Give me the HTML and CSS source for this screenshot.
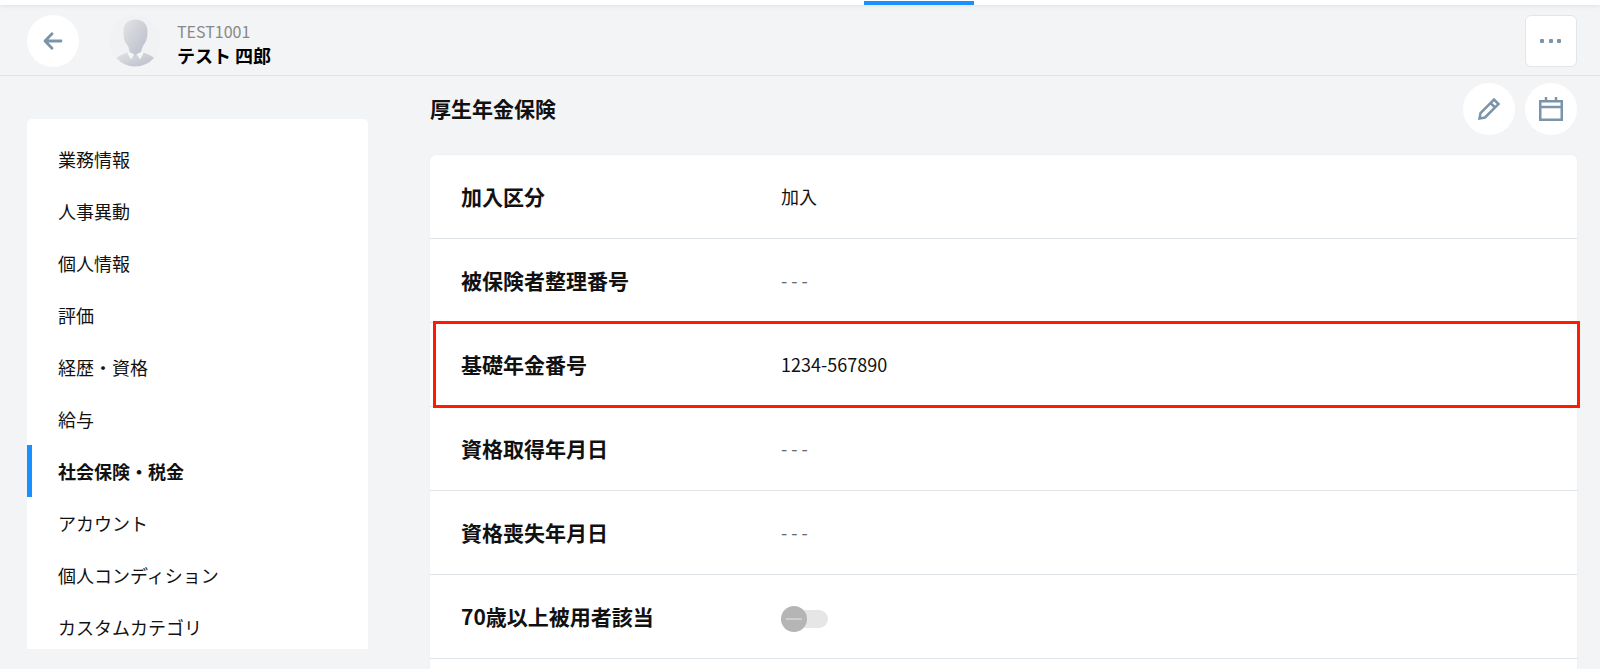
FILE: index.html
```html
<!DOCTYPE html>
<html lang="ja">
<head>
    <meta charset="UTF-8">
    <title>社会保険・税金</title>

    <link rel="stylesheet" href="styles.css">
</head>

<body>
    <div class="tabs">
        <div class="tab-active"></div>
    </div>

    <header class="header">
        <button type="button" class="circle" aria-label="戻る">
            <svg width="20" height="20" viewBox="0 0 20 20" fill="none" stroke="currentColor" stroke-width="2.8" stroke-linecap="round" stroke-linejoin="round">
                <path d="M18 10H2.5M9 2.7L2 10l7 7.3" />
            </svg>
        </button>
        <svg class="avatar" width="52" height="52" viewBox="0 0 52 52">
            <defs>
                <linearGradient id="avatarColor" x1="0" y1="0" x2="1" y2="1">
                    <stop offset="0" stop-color="#e2e3e5" />
                    <stop offset="1" stop-color="#b9bdc8" />
                </linearGradient>
            </defs>
            <circle cx="26" cy="26" r="26" fill="#f1f2f4" />
            <path d="M7.500 43Q13 38.500 19 37.500L33 37.500Q40 38.500 45 43Q37 51.500 26 51.500Q15 51.500 7.500 43z" fill="url(#avatarColor)" />
            <path d="M19.500 37L18.500 38.500L22 44.500L25 39.500H28L31 44.500L34.500 38.500L33 37z" fill="#f5f6f8" />
            <path d="M26.500 4.500C34 4.500 39 9.500 38.500 17C38.500 25 36 28 34 31Q32.500 34 32 37Q29 39 26 39Q23 39 20.500 37Q20.500 34 19 31C16.500 28 14.500 25 14.500 17C14 9.500 19 4.500 26.500 4.500z" fill="url(#avatarColor)" />
            <path d="M24.500 38L26 42L28.500 38z" fill="#c6c9d1" />
        </svg>
        <div class="person">
            <div class="person-code">TEST1001</div>
            <div class="person-name">テスト 四郎</div>
        </div>
        <button type="button" class="menu-button" aria-label="メニュー">
            <svg width="22" height="4" viewBox="0 0 22 4" fill="currentColor">
                <rect x="0" y="0" width="4" height="4" rx="1" />
                <rect x="9" y="0" width="4" height="4" rx="1" />
                <rect x="17" y="0" width="4" height="4" rx="1" />
            </svg>
        </button>
    </header>

    <div class="layout">
        <nav class="sidebar">
            <a href="#">業務情報</a>
            <a href="#">人事異動</a>
            <a href="#">個人情報</a>
            <a href="#">評価</a>
            <a href="#">経歴・資格</a>
            <a href="#">給与</a>
            <a href="#" class="active">社会保険・税金</a>
            <a href="#">アカウント</a>
            <a href="#">個人コンディション</a>
            <a href="#">カスタムカテゴリ</a>
        </nav>

        <main class="content">
            <div class="content-header">
                <h1>厚生年金保険</h1>
                <button type="button" class="circle" aria-label="編集">
                    <svg width="24" height="24" viewBox="0 0 24 24" fill="none" stroke="currentColor" stroke-width="2.500">
                        <path d="M2.500 21.500L3.500 16L17 2.500L21.500 7L8 20.500zM13.500 6L18 10.500" />
                    </svg>
                </button>
                <button type="button" class="circle" aria-label="カレンダー">
                    <svg width="24" height="24" viewBox="0 0 24 24" fill="none" stroke="currentColor" stroke-width="2.500">
                        <path d="M1.250 4.250H22.750V22.750H1.250zM1.250 10H22.750M7 0V4M17 0V4" />
                    </svg>
                </button>
            </div>

            <dl class="card">
                <div class="row">
                    <dt>加入区分</dt>
                    <dd>加入</dd>
                </div>
                <div class="row">
                    <dt>被保険者整理番号</dt>
                    <dd class="empty">- - -</dd>
                </div>
                <div class="row highlight">
                    <dt>基礎年金番号</dt>
                    <dd>1234-567890</dd>
                </div>
                <div class="row">
                    <dt>資格取得年月日</dt>
                    <dd class="empty">- - -</dd>
                </div>
                <div class="row">
                    <dt>資格喪失年月日</dt>
                    <dd class="empty">- - -</dd>
                </div>
                <div class="row">
                    <dt><label for="over70">70歳以上被用者該当</label></dt>
                    <dd><input type="checkbox" id="over70" class="toggle" disabled></dd>
                </div>
            </dl>
        </main>
    </div>
</body>
</html>
```

FILE: styles.css
```css
* {
    box-sizing: border-box;
}

body {
    display: flex;
    flex-direction: column;
    height: 100vh;
    margin: 0;
    overflow: hidden;
    background-color: #f3f4f6;
    color: #111;
    font-family: "Noto Sans CJK JP", sans-serif;
    font-size: 18px;
    line-height: 24px;
}

button {
    display: flex;
    align-items: center;
    justify-content: center;
    flex-shrink: 0;
    width: 52px;
    height: 52px;
    padding: 0;
    border: none;
    background-color: #fff;
    color: #7b94a9;
    cursor: pointer;
}

.circle {
    border-radius: 50%;
}

.tabs {
    flex-shrink: 0;
    height: 5px;
    padding-top: 1px;
    background-color: #fff;
    box-shadow: 0 1px 4px rgba(0, 0, 0, 0.08);
}

.tab-active {
    width: 110px;
    height: 4px;
    margin-left: 54%;
    background-color: #1890ff;
}

.header {
    display: flex;
    align-items: center;
    flex-shrink: 0;
    padding: 10px 23px 8px 27px;
    border-bottom: 1px solid #dfe2e6;
}

.avatar {
    margin: 0 16px 0 30px;
}

.person {
    padding-top: 3px;
}

.person-code {
    color: #888;
    font-size: 16px;
}

.person-name {
    color: #000;
    font-weight: bold;
}

.menu-button {
    margin-left: auto;
    border: 1px solid #e2e5ea;
    border-radius: 6px;
}

.layout {
    display: flex;
    flex: 1;
    gap: 62px;
    min-height: 0;
    padding: 0 23px 0 27px;
}

.sidebar {
    flex-shrink: 0;
    width: 341px;
    margin: 43px 0 20px;
    padding-top: 14px;
    overflow: hidden;
    border-radius: 5px 5px 0 0;
    background-color: #fff;
}

.sidebar a {
    display: block;
    padding: 14px 26px;
    border-left: 5px solid transparent;
    color: #111;
    text-decoration: none;
}

.sidebar .active {
    border-left-color: #1890ff;
    font-weight: bold;
}

.content {
    display: flex;
    flex: 1;
    flex-direction: column;
    padding-top: 7px;
}

.content-header {
    display: flex;
    align-items: center;
    gap: 10px;
    margin-bottom: 20px;
}

h1 {
    flex: 1;
    margin: 0;
    padding-bottom: 2px;
    font-size: 21px;
}

.card {
    flex: 1;
    margin: 0;
    border-radius: 5px 5px 0 0;
    background-color: #fff;
    box-shadow: 0 0 1px rgba(0, 0, 0, 0.15);
}

.row {
    display: flex;
    align-items: center;
    position: relative;
    height: 84px;
    padding: 0 31px 2px;
    border-bottom: 1px solid #dfe4e8;
}

dt {
    width: 320px;
    font-size: 21px;
    font-weight: bold;
}

dd {
    margin: 0;
}

.empty {
    color: #666;
}

/* red frame around the row */
.highlight::after {
    content: "";
    position: absolute;
    top: -2px;
    right: -3px;
    bottom: -2px;
    left: 3px;
    border: 3px solid #ff1a00;
}

.toggle {
    display: block;
    position: relative;
    width: 47px;
    height: 18px;
    margin: 6px 0 0;
    border-radius: 9px;
    background-color: #e6e6e6;
    appearance: none;
}

.toggle::before {
    content: "";
    position: absolute;
    top: -4px;
    left: 0;
    width: 26px;
    height: 26px;
    border-radius: 50%;
    background: linear-gradient(#cecece, #cecece) center / 16px 2px no-repeat #b5b5b5;
}
```
